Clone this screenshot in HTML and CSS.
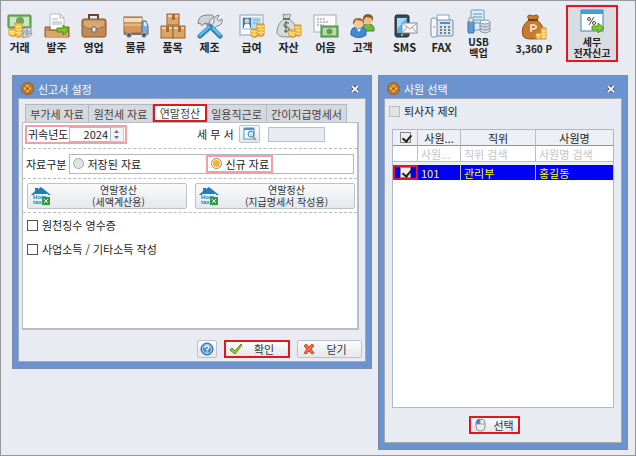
FILE: index.html
```html
<!DOCTYPE html>
<html lang="ko">
<head>
    <meta charset="UTF-8">
    <title>세무 전자신고</title>
    <link rel="stylesheet" href="styles.css">
</head>
<body>
    <nav class="toolbar">
        <div class="group">
            <button class="tool">
                <svg viewBox="0 0 26 26"><rect x="1" y="2" width="23" height="13" rx="1" fill="#7db36c" stroke="#4b8a47"/><rect x="3" y="4" width="19" height="9" fill="#cfe6bd"/><circle cx="13" cy="8" r="4" fill="#6ba65c"/><path d="M2 16v6q4 3 7 0v-6zM8 10v13q4 3 7 0V10z" fill="#f6c445" stroke="#d8932a"/><path d="M2 18q4 2 6 0M2 20q4 2 6 0M8 13q4 2 7 0M8 16q4 2 7 0M8 19q4 2 7 0" fill="none" stroke="#fff0a0"/><path d="M15 19q1-5 7-4l2-1v5h-5l2-2q-3 0-4 2zM25 20q-1 5-7 4l-2 1v-5h5l-2 2q3 0 4-2z" fill="#d5dbe2" stroke="#7b858f" stroke-width=".8"/></svg>
                <span>거래</span>
            </button>
            <button class="tool">
                <svg viewBox="0 0 26 26"><path d="M6 1h10l4 4v12H6z" fill="#fff" stroke="#b5b9be"/><path d="M16 1v4h4M8 6h6M8 9h10M8 11h10" fill="none" stroke="#a9b0b8"/><path d="M1 14h5v3h14v-3h5v10H1z" fill="#c58a52" stroke="#925a2a"/><path d="M2 18h22v6H2z" fill="#d9a56d"/><path d="M13 15h6v-3l6 5-6 5v-3h-6z" fill="#7cc423" stroke="#4d8f14"/></svg>
                <span>발주</span>
            </button>
            <button class="tool">
                <svg viewBox="0 0 26 26"><path d="M8 6V2h9v4" fill="none" stroke="#6b4526" stroke-width="2"/><rect x="1" y="6" width="24" height="18" rx="2" fill="#c18a52" stroke="#8a5728"/><path d="M2 7h22v6q-11 6-22 0z" fill="#d8a872" stroke="#9d6a38" stroke-width=".8"/><rect x="11" y="14" width="4" height="5" rx="1" fill="#eee" stroke="#666"/></svg>
                <span>영업</span>
            </button>
        </div>
        <div class="group">
            <button class="tool">
                <svg viewBox="0 0 26 26"><rect x="1" y="4" width="18" height="16" fill="#d39a5c" stroke="#9a6530"/><rect x="1" y="5" width="18" height="4" fill="#f4dfba"/><path d="M1 12h18" stroke="#f0d4a6"/><path d="M19 8h4l2 5v8h-6z" fill="#7ea9d8" stroke="#4a75a8"/><path d="M21 9h2l1 4h-3z" fill="#e3f1fc"/><path d="M1 20h24v2H1z" fill="#6d737b"/><circle cx="6" cy="22" r="2.500" fill="#555" stroke="#bbb"/><circle cx="21" cy="22" r="2.500" fill="#555" stroke="#bbb"/></svg>
                <span>물류</span>
            </button>
            <button class="tool">
                <svg viewBox="0 0 26 26"><g fill="#daa567" stroke="#99632d"><rect x="7" y="1" width="12" height="11"/><rect x="1" y="13" width="12" height="12"/><rect x="13" y="13" width="12" height="12"/></g><path d="M8 3h10M2 15h10M14 15h10" stroke="#f4d6a5" stroke-width="2"/><path d="M12 1h3v6h-3zM6 13h3v6H6zM18 13h3v6h-3z" fill="#a76b34"/></svg>
                <span>품목</span>
            </button>
            <button class="tool">
                <svg viewBox="0 0 26 26"><path d="M9 9l5 5" stroke="#8f989f" stroke-width="4"/><path d="M1 11q0-9 9-9h5l2 2-4 3-1 4-4-1-3 3-2-3z" fill="#cdd2d6" stroke="#7f878e"/><path d="M14 13l3-4q-1-6 5-7l-2 4 2 2 3-2q1 6-5 7l-3 3z" fill="#dfe3e6" stroke="#7f878e"/><path d="M3 23l10-9M23 23l-8-8" stroke="#287db5" stroke-width="5" stroke-linecap="round"/><path d="M3 22l9-8M23 22l-7-7" stroke="#62b9e8" stroke-width="3" stroke-linecap="round"/></svg>
                <span>제조</span>
            </button>
        </div>
        <div class="group">
            <button class="tool">
                <svg viewBox="0 0 26 26"><rect x="1" y="2" width="23" height="20" fill="#f8fbfe" stroke="#8aa0b5"/><rect x="3" y="4" width="19" height="13" fill="#b9dcf3"/><rect x="4" y="5" width="8" height="10" fill="#2b78bb"/><circle cx="8" cy="8" r="2.500" fill="#f3c69b"/><path d="M5 15q0-5 3-4 3-1 3 4z" fill="#fff"/><path d="M14 7h7M14 10h5" stroke="#6da4ce"/><path d="M12 16v7q4 3 7 0v-7zM18 11v11q4 3 7 0V11z" fill="#f6bd3b" stroke="#d58c22"/><path d="M12 18q4 2 6 0M12 21q4 2 6 0M18 13q4 2 7 0M18 16q4 2 7 0M18 19q4 2 7 0" fill="none" stroke="#fff0a0"/></svg>
                <span>급여</span>
            </button>
            <button class="tool">
                <svg viewBox="0 0 26 26"><path d="M7 1l3 1 2-1 3 1-2 4q8 5 7 14-1 4-9 4-11 0-10-6Q2 10 8 6z" fill="#d6dcda" stroke="#879390"/><path d="M7 6h7" stroke="#68736f" stroke-width="2"/><path d="M13 10q-5-1-5 2t3 2q3 1 2 3t-5 1M10 8v12" fill="none" stroke="#465850"/><path d="M13 17v6q4 3 7 0v-6zM19 12v10q4 3 6 0V12z" fill="#f6bd3b" stroke="#d58c22"/><path d="M13 19q4 2 6 0M13 21q4 2 6 0M19 14q4 2 6 0M19 17q4 2 6 0M19 20q4 2 6 0" fill="none" stroke="#fff0a0"/></svg>
                <span>자산</span>
            </button>
            <button class="tool">
                <svg viewBox="0 0 26 26"><rect x="1" y="2" width="22" height="17" fill="#fafafa" stroke="#a7adb1"/><path d="M4 6h8M4 9h12M4 12h7" stroke="#888f95" stroke-dasharray="2 1"/><rect x="8" y="13" width="17" height="11" fill="#73b36c" stroke="#45873f"/><rect x="10" y="15" width="13" height="7" fill="#b9dda6"/><circle cx="16.500" cy="18.500" r="3" fill="#5c9f55"/></svg>
                <span>어음</span>
            </button>
            <button class="tool">
                <svg viewBox="0 0 26 26"><path d="M11 18q1-8 7-7 7 0 6 7z" fill="#72b83b" stroke="#468a20"/><circle cx="18" cy="7" r="4.500" fill="#f1bd8d"/><path d="M13 8q-1-7 5-7 6 0 5 7l-2-3-5-1z" fill="#8d572a"/><path d="M1 22q-1-9 8-8 8-1 7 8-7 5-15 0z" fill="#448bd5" stroke="#2863a6"/><circle cx="8.500" cy="11" r="4.500" fill="#f5c898"/><path d="M3 12Q2 5 8 5q7 0 6 7l-2-4-6-1z" fill="#9b602e"/><path d="M7 16l2 3 2-3" fill="#fff"/></svg>
                <span>고객</span>
            </button>
        </div>
        <div class="group">
            <button class="tool">
                <svg viewBox="0 0 26 26"><rect x="3" y="2" width="14" height="22" rx="2" fill="#3d4751" stroke="#242c34"/><rect x="5" y="5" width="10" height="15" fill="#55b3e8"/><path d="M5 5h10L5 16z" fill="#a5dcfa"/><circle cx="10" cy="22" r="1" fill="#ccc"/><rect x="10" y="10" width="15" height="10" fill="#f7f7f7" stroke="#8c9297"/><path d="M10 10l8 6 7-6M10 20l5-6M25 20l-5-6" fill="none" stroke="#9da3a8"/></svg>
                <span>SMS</span>
            </button>
            <button class="tool">
                <svg viewBox="0 0 26 26"><path d="M8 2h12v8H8z" fill="#fff" stroke="#7fa5c7"/><rect x="5" y="7" width="19" height="16" rx="1" fill="#d9e4ee" stroke="#7890a6"/><rect x="2" y="5" width="6" height="19" rx="2" fill="#f2f6fa" stroke="#7890a6"/><path d="M11 10h10" stroke="#558cbb" stroke-width="2"/><path d="M11 14h10M11 17h10M11 20h10" stroke="#6d7e8e" stroke-width="2" stroke-dasharray="2 2"/><path d="M4 14h2" stroke="#e66"/></svg>
                <span>FAX</span>
            </button>
            <button class="tool two-line">
                <svg viewBox="0 0 26 26"><rect x="5" y="1" width="13" height="20" rx="1" fill="#dcecf8" stroke="#6d9abd"/><path d="M7 5h9M7 8h9M7 11h9M7 14h9" stroke="#5595c4"/><rect x="2" y="12" width="6" height="12" rx="1" fill="#5d9bd5" stroke="#3770a7"/><rect x="3" y="9" width="4" height="4" fill="#eee" stroke="#999"/><path d="M14 13v9q5 4 10 0v-9z" fill="#d5dce2" stroke="#8494a2"/><ellipse cx="19" cy="13" rx="5" ry="2" fill="#f5f8fa" stroke="#8494a2"/><path d="M14 16q5 4 10 0M14 19q5 4 10 0" fill="none" stroke="#8494a2"/></svg>
                <span>USB<br>백업</span>
            </button>
        </div>
        <button class="tool point">
            <svg viewBox="0 0 26 26"><path d="M8 6q-3-5 1-5l3 1 3-1q4 0 1 5 8 6 6 15-1 4-10 4T2 22Q-1 12 8 6z" fill="#c67b31" stroke="#965018"/><path d="M7 6h10" stroke="#7d3e12" stroke-width="2"/><path d="M10 18v-7h3q5 2 0 4h-3" fill="none" stroke="#fff0d8" stroke-width="1.500"/><path d="M15 19h5v6h-5zM20 14h5v11h-5z" fill="#f8cb55" stroke="#d4902a"/><path d="M15 21h5M20 17h5M20 20h5M20 23h5" stroke="#fff1a7"/></svg>
            <span>3,360 P</span>
        </button>
        <button class="tool two-line efile">
            <svg viewBox="0 0 26 26"><rect x="2" y="1" width="22" height="21" fill="#fff" stroke="#3d87ba"/><rect x="2" y="1" width="22" height="4" fill="#4a9dd0"/><g fill="none" stroke="#444"><circle cx="10" cy="10" r="1.500"/><circle cx="15" cy="14" r="1.500"/><path d="M15 8l-5 8"/></g><path d="M13 17h6v-3l6 5-6 5v-3h-6z" fill="#86c82b" stroke="#4b9512"/></svg>
            <span>세무<br>전자신고</span>
        </button>
    </nav>

    <main>
        <section class="dialog">
            <header>
                <svg class="logo" viewBox="0 0 13 13"><circle cx="6.500" cy="6.500" r="6" fill="#c07a20" stroke="#94601c"/><path d="M6.500 3v7M3 6.500h7" stroke="#f0c070" stroke-width="2"/><circle cx="6.500" cy="6.500" r="1.500" fill="#9c5f17"/></svg>
                <h2>신고서 설정</h2>
                <button class="close" aria-label="닫기"><svg viewBox="0 0 9 9"><path d="M1 1l7 7M8 1L1 8" stroke="#475a78" stroke-width="4"/><path d="M1 1l7 7M8 1L1 8" stroke="#fff" stroke-width="2"/></svg></button>
            </header>
            <div class="inner">
                <div class="tabs" role="tablist">
                    <button role="tab">부가세 자료</button>
                    <button role="tab">원천세 자료</button>
                    <button role="tab" class="active" aria-selected="true">연말정산</button>
                    <button role="tab">일용직근로</button>
                    <button role="tab">간이지급명세서</button>
                </div>
                <div class="panel">
                    <div class="row first">
                        <div class="year">
                            <label for="year">귀속년도</label>
                            <input type="text" id="year" value="2024">
                            <button class="spin" aria-label="연도 변경"><svg viewBox="0 0 7 11"><path d="M1 4l2.500-3L6 4zM1 7l2.500 3L6 7z" fill="#68727d"/></svg></button>
                        </div>
                        <label for="office" class="office-label">세 무 서</label>
                        <button class="btn search" aria-label="세무서 검색"><svg viewBox="0 0 14 14"><rect x="1" y="1" width="10" height="11" fill="#fff" stroke="#4a94c5"/><path d="M1 2h10" stroke="#4a94c5" stroke-width="2"/><path d="M10 10l3 3" stroke="#e09b26" stroke-width="2"/><circle cx="8" cy="7" r="3" fill="#c4e6f8" stroke="#3987ba"/></svg></button>
                        <input type="text" id="office" class="office" disabled>
                    </div>
                    <div class="row kind">
                        <span>자료구분</span>
                        <div class="radios">
                            <label><input type="radio" name="kind">저장된 자료</label>
                            <label class="marked"><input type="radio" name="kind" checked>신규 자료</label>
                        </div>
                    </div>
                    <div class="row hometax">
                        <button class="btn">
                            <svg viewBox="0 0 20 18"><path d="M0 8l4-4V1h3v1l3-2 10 8h-3v9H3V8z" fill="#217eb9"/><rect x="3" y="7" width="14" height="10" fill="#e4f2fa"/><text x="2" y="12">Hom</text><text x="2" y="17">tax</text><rect x="11" y="10" width="8" height="8" fill="#2f9d3e"/><path d="M13 12l4 4M17 12l-4 4" stroke="#fff"/></svg>
                            <span>연말정산<br>(세액계산용)</span>
                        </button>
                        <button class="btn">
                            <svg viewBox="0 0 20 18"><path d="M0 8l4-4V1h3v1l3-2 10 8h-3v9H3V8z" fill="#217eb9"/><rect x="3" y="7" width="14" height="10" fill="#e4f2fa"/><text x="2" y="12">Hom</text><text x="2" y="17">tax</text><rect x="11" y="10" width="8" height="8" fill="#2f9d3e"/><path d="M13 12l4 4M17 12l-4 4" stroke="#fff"/></svg>
                            <span>연말정산<br>(지급명세서 작성용)</span>
                        </button>
                    </div>
                    <div class="checks">
                        <label><input type="checkbox">원천징수 영수증</label>
                        <label><input type="checkbox">사업소득 / 기타소득 작성</label>
                    </div>
                </div>
                <footer>
                    <button class="btn help" aria-label="도움말"><svg viewBox="0 0 14 14"><circle cx="7" cy="7" r="6" fill="#4b91cb" stroke="#28679e"/><circle cx="7" cy="7" r="4.500" fill="none" stroke="#b8daf2"/><path d="M5 6q0-2 2-2t2 1.500q0 1-2 2V8.500M7 9.500v1" fill="none" stroke="#fff" stroke-width="1.300"/></svg></button>
                    <button class="btn ok"><svg viewBox="0 0 14 14"><path d="M1 8l2-2 3 3 6-7 1 1-7 9z" fill="#93cf2f" stroke="#568f16"/></svg><span>확인</span></button>
                    <button class="btn cancel"><svg viewBox="0 0 14 14"><path d="M2 4l2-2 3 3 3-3 2 2-3 3 3 4-2 1-3-3-3 3-2-1 3-4z" fill="#f4694a" stroke="#d8482c"/></svg><span>닫기</span></button>
                </footer>
            </div>
        </section>

        <section class="dialog staff">
            <header>
                <svg class="logo" viewBox="0 0 13 13"><circle cx="6.500" cy="6.500" r="6" fill="#c07a20" stroke="#94601c"/><path d="M6.500 3v7M3 6.500h7" stroke="#f0c070" stroke-width="2"/><circle cx="6.500" cy="6.500" r="1.500" fill="#9c5f17"/></svg>
                <h2>사원 선택</h2>
                <button class="close" aria-label="닫기"><svg viewBox="0 0 9 9"><path d="M1 1l7 7M8 1L1 8" stroke="#475a78" stroke-width="4"/><path d="M1 1l7 7M8 1L1 8" stroke="#fff" stroke-width="2"/></svg></button>
            </header>
            <div class="inner">
                <label class="retired"><input type="checkbox">퇴사자 제외</label>
                <div class="list">
                    <table>
                        <thead>
                            <tr>
                                <th class="c-check"><input type="checkbox" aria-label="전체 선택" checked></th>
                                <th class="c-no">사원...</th>
                                <th class="c-pos">직위</th>
                                <th>사원명</th>
                            </tr>
                            <tr class="filter">
                                <td></td>
                                <td><input type="text" placeholder="사원..." aria-label="사원 검색"></td>
                                <td><input type="text" placeholder="직위 검색" aria-label="직위 검색"></td>
                                <td><input type="text" placeholder="사원명 검색" aria-label="사원명 검색"></td>
                            </tr>
                            <tr class="space"><td colspan="4"></td></tr>
                        </thead>
                        <tbody>
                            <tr class="selected">
                                <td class="marked"><input type="checkbox" aria-label="홍길동 선택" checked></td>
                                <td>101</td>
                                <td>관리부</td>
                                <td>홍길동</td>
                            </tr>
                        </tbody>
                    </table>
                </div>
                <button class="btn pick"><svg viewBox="0 0 12 14"><rect x="2" y="1" width="9" height="12" rx="4" fill="#eceef0" stroke="#8a9098"/><path d="M2 6V4q1-3 4-3v5z" fill="#4c7fe0"/><path d="M2 6h9M6 1v5" stroke="#8a9098" stroke-width=".8"/></svg><span>선택</span></button>
            </div>
        </section>
    </main>
</body>
</html>
```

FILE: styles.css
```css
* {
    box-sizing: border-box;
}
body {
    margin: 0;
    min-height: 100vh;
    display: flex;
    flex-direction: column;
    border: 1px solid #98989c;
    background: #e8ebf1;
    color: #222;
    font: 11px/14px "Noto Sans CJK KR", sans-serif;
}
button, input {
    font: inherit;
    color: inherit;
    margin: 0;
    padding: 0;
}
button {
    cursor: pointer;
}
svg {
    display: block;
    flex: none;
}

/* toolbar */
.toolbar {
    display: flex;
    align-items: flex-start;
    height: 74px;
    padding-top: 4px;
}
.group {
    display: flex;
    margin-right: 5px;
}
.tool {
    display: flex;
    flex-direction: column;
    align-items: center;
    width: 37px;
    padding-top: 8px;
    border: none;
    background: none;
    font-weight: bold;
    line-height: 14px;
    white-space: nowrap;
}
.tool svg {
    width: 26px;
    height: 26px;
    margin-bottom: 1px;
}
.tool.two-line {
    padding-top: 4px;
    font-size: 10px;
    line-height: 11px;
}
.tool.point {
    width: 56px;
    margin: 0 4px;
    padding-top: 9px;
    font-size: 10px;
}
.tool.point svg {
    margin-bottom: 2px;
}
.tool.efile {
    width: 52px;
    height: 57px;
    padding-top: 2px;
    border: 2px solid #e3151f;
    background: #d9dce3;
}

/* dialogs */
main {
    flex: 1;
    display: grid;
    grid-template-columns: 360fr 250fr;
    gap: 6px;
    padding: 0 7px 5px 11px;
}
.dialog {
    align-self: start;
    display: flex;
    flex-direction: column;
    border: 1px solid #7d8ba6;
    background: #6a93d0;
    padding: 0 5px 6px;
}
.dialog header {
    display: flex;
    align-items: center;
    gap: 4px;
    height: 22px;
    padding: 3px 7px 0 3px;
}
.dialog h2 {
    flex: 1;
    margin: 0;
    color: #fff;
    font-size: 11px;
    font-weight: normal;
}
.logo {
    width: 13px;
    height: 13px;
}
.close {
    border: none;
    background: none;
}
.close svg {
    width: 8px;
    height: 8px;
}
.inner {
    border: 1px solid #a3a9b4;
    background: #e8ebf1;
    padding: 5px 3px 3px;
}

/* tabs */
.tabs {
    display: flex;
    padding-left: 3px;
}
.tabs button {
    flex: 0 1 64px;
    height: 18px;
    border: 1px solid #b4b8bf;
    border-left-width: 0;
    border-bottom: none;
    background: #d5d8dd;
    color: #444;
    line-height: 16px;
    white-space: nowrap;
}
.tabs button:first-child {
    border-left-width: 1px;
}
.tabs button:nth-child(4) {
    flex-basis: 60px;
}
.tabs button:last-child {
    flex-basis: 80px;
}
.tabs .active {
    flex-basis: 54px;
    border: 2px solid #e3151f;
    background: #fff;
    line-height: 14px;
}
.panel {
    min-height: 208px;
    margin-right: 3px;
    border: 1px solid #b9bec6;
    border-right-width: 2px;
    border-bottom-width: 2px;
    background: #fff;
}
.row {
    display: flex;
    align-items: center;
    border-bottom: 1px dashed #b9bbc0;
    padding: 0 3px;
}

/* year / tax office */
.first {
    height: 26px;
    padding: 0 3px 3px 2px;
}
.year {
    display: flex;
    align-items: center;
    width: 102px;
    height: 19px;
    padding: 0 1px;
    border: 2px solid #f59ea5;
    white-space: nowrap;
}
.year input {
    width: 42px;
    height: 15px;
    margin-left: auto;
    padding-right: 2px;
    border: 1px solid #b3bbc6;
    text-align: right;
}
.spin {
    width: 13px;
    height: 15px;
    padding: 1px 2px;
    border: 1px solid #c5cad2;
    border-left: none;
    background: #f1f3f6;
}
.spin svg {
    width: 7px;
    height: 11px;
}
.office-label {
    margin-left: 70px;
    width: 36px;
    white-space: nowrap;
}
.btn {
    display: flex;
    align-items: center;
    border: 1px solid #bcc2ca;
    border-radius: 2px;
    background: linear-gradient(#fafbfc, #e4e8ec);
    color: #333;
}
.search {
    justify-content: center;
    width: 21px;
    height: 18px;
    margin-left: 6px;
}
.search svg, .help svg, .ok svg, .cancel svg {
    width: 14px;
    height: 14px;
}
.office {
    width: 57px;
    height: 15px;
    margin-left: 8px;
    border: 1px solid #b9c0ca;
    background: #e8ebf1;
}

/* radios */
.kind {
    height: 30px;
    gap: 3px;
    white-space: nowrap;
}
.radios {
    flex: 1;
    display: flex;
    align-items: center;
    height: 20px;
    padding-left: 3px;
    border: 1px solid #b3b8c0;
}
.radios label {
    display: flex;
    align-items: center;
    gap: 3px;
    width: 133px;
}
.radios .marked {
    width: 67px;
    height: 18px;
    padding-left: 3px;
    border: 2px solid #f59ea5;
}
input[type="radio"] {
    appearance: none;
    width: 11px;
    height: 11px;
    border: 1px solid #a4a7ab;
    border-radius: 50%;
    background: #e3e3e3;
}
input[type="radio"]:checked {
    border-color: #8e8b80;
    background: radial-gradient(#f5b51e 0 3px, #fff4cf 4px);
}

/* hometax buttons */
.hometax {
    height: 34px;
    gap: 8px;
    padding: 0 2px 0 4px;
}
.hometax .btn {
    flex: 1;
    height: 26px;
    padding-left: 3px;
    line-height: 12px;
}
.hometax svg {
    width: 20px;
    height: 18px;
}
.hometax text {
    fill: #217eb9;
    font: bold 6px "Liberation Sans", sans-serif;
}
.hometax .btn span {
    font-size: 10px;
}
.hometax .btn span, .ok span, .cancel span {
    flex: 1;
    text-align: center;
}

/* checkboxes */
.checks {
    display: grid;
    gap: 10px;
    padding: 5px 4px;
}
.checks label, .retired {
    display: flex;
    align-items: center;
    gap: 4px;
}
input[type="checkbox"] {
    appearance: none;
    display: block;
    width: 11px;
    height: 11px;
    border: 1px solid #555;
    background: #fff;
}
input[type="checkbox"]:checked {
    border-color: #888;
    background: #eee;
}
input[type="checkbox"]:checked::after {
    content: "";
    display: block;
    width: 4px;
    height: 7px;
    margin-left: 3px;
    border: solid #222;
    border-width: 0 2px 2px 0;
    transform: rotate(40deg);
}

footer {
    display: flex;
    justify-content: flex-end;
    gap: 7px;
    padding-top: 10px;
}
footer .btn {
    height: 18px;
    width: 65px;
    padding: 0 4px;
}
footer .help {
    justify-content: center;
    width: 20px;
}
footer .ok, .pick {
    border: 2px solid #e3151f;
    border-radius: 0;
}
footer .ok {
    width: 66px;
    padding: 0 3px;
}

/* staff picker */
.staff {
    align-self: stretch;
}
.staff .inner {
    flex: 1;
    display: flex;
    flex-direction: column;
    padding: 5px 7px 8px;
}
.retired {
    margin-left: -3px;
}
.retired input[type="checkbox"] {
    border-color: #bbb;
    background: #e3e3e3;
}
.list {
    flex: 1;
    margin: 11px 0 8px;
    border: 1px solid #aeb8c6;
    background: #fff;
}
table {
    width: 100%;
    table-layout: fixed;
    border-collapse: separate;
    border-spacing: 0;
}
th, td {
    height: 15px;
    padding: 0 0 0 3px;
    border-right: 1px solid #b8bdc6;
    line-height: 14px;
    font-weight: normal;
    white-space: nowrap;
    overflow: hidden;
}
th {
    height: 16px;
    padding: 0;
    border-bottom: 1px solid #8f959e;
    background: #eceff3;
}
th:last-child, td:last-child {
    border-right: none;
}
th input[type="checkbox"], td input[type="checkbox"] {
    margin: 0 auto;
}
.c-check {
    width: 25px;
}
.c-no {
    width: 43px;
}
.c-pos {
    width: 75px;
}
.filter input {
    display: block;
    width: 100%;
    height: 14px;
    border: none;
    background: none;
}
.filter input::placeholder {
    color: #c4c4c4;
}
.space td {
    height: 4px;
    border-top: 1px solid #b8bdc6;
    background: #eceff3;
}
.selected td {
    background: #0000f5;
    color: #ff0;
}
.selected .marked {
    padding: 0;
    border: 2px solid #e3151f;
}
.pick {
    align-self: center;
    gap: 8px;
    width: 51px;
    height: 18px;
    margin-right: 18px;
    padding-left: 3px;
}
.pick svg {
    width: 12px;
    height: 14px;
}
```
